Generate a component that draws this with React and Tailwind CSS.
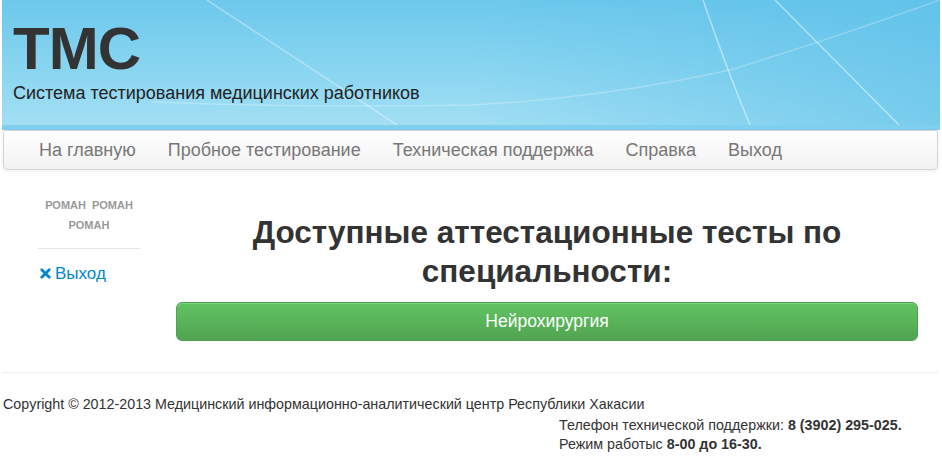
import { X } from "lucide-react";

const navItems = ["На главную", "Пробное тестирование", "Техническая поддержка", "Справка", "Выход"];

function HeaderLines() {
  return (
    <svg className="absolute inset-0 w-full h-full" viewBox="0 0 938 125" preserveAspectRatio="none">
      <path d="M205 0 L395 125" stroke="#ffffff" strokeOpacity="0.35" strokeWidth="1.5" fill="none" />
      <path d="M701 0 Q725 70 748 125" stroke="#ffffff" strokeOpacity="0.45" strokeWidth="1.5" fill="none" />
      <path d="M773 0 L897 125" stroke="#ffffff" strokeOpacity="0.45" strokeWidth="1.5" fill="none" />
      <path d="M938 0 Q820 42 728 70 Q600 98 470 105 Q300 108 150 102" stroke="#ffffff" strokeOpacity="0.25" strokeWidth="1.5" fill="none" />
    </svg>
  );
}

export default function App() {
  return (
    <main className="w-[942px] min-h-[466px] bg-white text-[#333]" style={{ fontFamily: '"Liberation Sans", Arial, sans-serif' }}>
      {/* Header */}
      <header className="ml-[2px] w-[938px]">
        <div className="relative h-[125px] overflow-hidden bg-gradient-to-b from-[#6cc8ec] via-[#86d4f0] to-[#a2dff4]">
          <div className="absolute inset-0 bg-gradient-to-r from-transparent via-transparent to-[#5bbfe8]/60" />
          <HeaderLines />
          <div className="relative pl-[11px] pt-[16px]">
            <h1 className="text-[60px] leading-[66px] font-bold text-[#333] tracking-[-1px]">ТМС</h1>
            <p className="mt-[1px] text-[18px] leading-[20px] text-[#222]">Система тестирования медицинских работников</p>
          </div>
        </div>
        <div className="h-[5px] bg-[#7fd0ef]" />
      </header>

      {/* Nav */}
      <nav className="ml-[3px] w-[935px] h-[40px] rounded-b-[4px] rounded-t-[2px] border border-[#d4d4d4] bg-gradient-to-b from-white to-[#f2f2f2] shadow-[0_1px_4px_rgba(0,0,0,0.065)] flex items-center pl-[19px]">
        {navItems.map((item) => (
          <span key={item} className="px-[16px] text-[18px] text-[#777]">{item}</span>
        ))}
      </nav>

      {/* Body */}
      <div className="flex pt-[25px]">
        <aside className="ml-[38px] w-[102px]">
          <div className="text-center text-[11px] leading-[20px] font-bold text-[#999] uppercase">
            Роман&nbsp; Роман
            <br />
            Роман
          </div>
          <div className="mt-[13px] h-px bg-[#e5e5e5]" />
          <a className="mt-[12px] flex items-center gap-[2px] text-[17px] text-[#0088cc]">
            <X size={15} strokeWidth={4.5} />
            Выход
          </a>
        </aside>

        <section className="ml-[36px] w-[742px]">
          <h2 className="mt-[18px] text-center text-[31.5px] leading-[39px] font-bold text-[#333]">
            Доступные аттестационные тесты по
            <br />
            специальности:
          </h2>
          <button className="mt-[11px] w-full h-[39px] rounded-[6px] border border-[#4fa34f] bg-gradient-to-b from-[#62c462] to-[#51a351] text-white text-[17.5px] shadow-[inset_0_1px_0_rgba(255,255,255,0.2)]">
            Нейрохирургия
          </button>
        </section>
      </div>

      {/* Footer */}
      <div className="ml-[2px] w-[936px] mt-[31px] h-px bg-[#eeeeee]" />
      <footer className="pl-[3px] pt-[21px] text-[14.3px] leading-[20px] text-[#333]">
        <p>Copyright © 2012-2013 Медицинский информационно-аналитический центр Республики Хакасии</p>
        <div className="ml-[556px] mt-[2px] leading-[19px]">
          <p>Телефон технической поддержки: <b>8 (3902) 295-025.</b></p>
          <p>Режим работыс <b>8-00 до 16-30.</b></p>
        </div>
      </footer>
    </main>
  );
}
